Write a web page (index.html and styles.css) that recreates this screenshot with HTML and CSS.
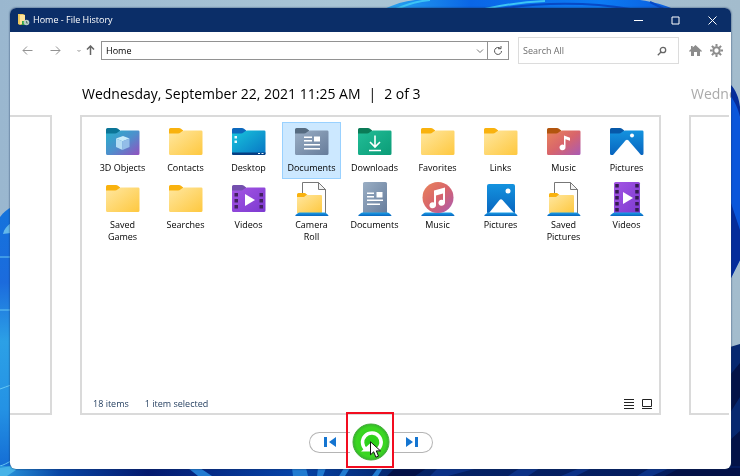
FILE: index.html
```
<!DOCTYPE html>
<html lang="en">
<head>
    <meta charset="UTF-8">
    <meta name="viewport" content="width=device-width, initial-scale=1.0">
    <title>Home - File History</title>
    <link rel="stylesheet" href="styles.css">
</head>
<body>
    <!-- Desktop wallpaper -->
    <svg class="wallpaper" viewBox="0 0 740 476" preserveAspectRatio="none" aria-hidden="true">
        <defs>
            <linearGradient id="sky" x2="1"><stop stop-color="#9ab7cf"/><stop offset=".45" stop-color="#a9c5d6"/><stop offset="1" stop-color="#a3bccd"/></linearGradient>
            <linearGradient id="petal-left" x2="0" y2="1"><stop stop-color="#1473dc"/><stop offset=".28" stop-color="#1b6bdd"/><stop offset=".5" stop-color="#2ca0e6"/><stop offset=".75" stop-color="#2492e4"/><stop offset="1" stop-color="#1267d2"/></linearGradient>
            <linearGradient id="petal-top" x2="1"><stop stop-color="#28a5ef"/><stop offset=".3" stop-color="#0a66e6"/><stop offset=".75" stop-color="#0c7bf3"/><stop offset="1" stop-color="#0a5cdc"/></linearGradient>
            <linearGradient id="petal-bottom" x2="1"><stop stop-color="#2b9be0"/><stop offset=".08" stop-color="#0846a5"/><stop offset=".2" stop-color="#04196e"/><stop offset=".4" stop-color="#0644a8"/><stop offset=".55" stop-color="#042266"/><stop offset="1" stop-color="#041a5c"/></linearGradient>
        </defs>
        <path fill="url(#sky)" d="M0 0h740v476H0z"/>
        <path fill="url(#petal-top)" d="M384 9C395 4 404 1 415 0h225c14 2 25 5 33 9z"/>
        <path fill="none" stroke="#3cc4f5" stroke-width="2" d="M396 9c12-5 22-8 34-9M485 9c18-4 35-7 60-8"/>
        <path fill="none" stroke="#0749c5" stroke-width="2" d="M500 9c40-7 90-7 130 0M650 2l14 7"/>
        <path fill="url(#petal-left)" d="M0 217c4-5 7-8 12-10v269H0z"/>
        <path fill="#63b8ea" d="M3 234c1-5 4-8 8-11v10c-3 0-6 1-8 1z"/>
        <path fill="none" stroke="#67c7f3" stroke-width="1" d="M0 257h11M0 310h11M0 389c4-1 7-3 11-4M0 466c4-1 7-3 11-5"/>
        <path fill="#0a56db" d="M730 84c7 10 10 21 10 34v142l-10 20z"/>
        <path fill="#052d9b" d="M730 84c6 6 9 14 10 23v10c-2-9-5-15-10-22zM730 200l10 30v30l-10 20z"/>
        <path fill="#072870" d="M730 347l10-3v132h-10z"/>
        <path fill="#041348" d="M730 375l10-12v34l-10 16zM730 440l10-9v45h-10z"/>
        <path fill="url(#petal-bottom)" d="M0 466h740v10H0z"/>
        <path fill="#46b3e8" d="M0 476v-8l12-2 4 4-9 6z"/>
        <path fill="#217bd1" d="M188 468h12l12 8h-14zM292 468h14l2 8h-15zM318 468h8l-3 8h-6zM344 468h6l-5 8h-6zM378 468h5l-5 8h-6z"/>
        <path fill="#0b3187" d="M438 468h40l-30 8h-18zM520 468h20l-12 8h-20zM580 468h12l-16 8h-15zM650 468h20l-18 8h-15z"/>
        <path fill="#031047" d="M395 468h32l-12 8h-28zM680 468h60v8h-75z"/>
    </svg>

    <!-- Shared icon artwork -->
    <svg class="sprite" aria-hidden="true">
        <defs>
            <linearGradient id="g-yellow" x2="1" y2="1"><stop stop-color="#ffe7a0"/><stop offset="1" stop-color="#fec83f"/></linearGradient>
            <linearGradient id="g-3d" x2="1" y2="1"><stop stop-color="#26b1cb"/><stop offset=".5" stop-color="#4d90cc"/><stop offset="1" stop-color="#9350bf"/></linearGradient>
            <linearGradient id="g-desktop" x2="1" y2="1"><stop stop-color="#18c5dc"/><stop offset="1" stop-color="#0874c4"/></linearGradient>
            <linearGradient id="g-grey" x2="1" y2="1"><stop stop-color="#9aaec4"/><stop offset="1" stop-color="#667c9b"/></linearGradient>
            <linearGradient id="g-green" x2="1" y2="1"><stop stop-color="#22bd97"/><stop offset="1" stop-color="#0b9c77"/></linearGradient>
            <linearGradient id="g-music" x2="1" y2="1"><stop stop-color="#e9855a"/><stop offset=".5" stop-color="#d8656b"/><stop offset="1" stop-color="#a95ab5"/></linearGradient>
            <linearGradient id="g-blue" x2="0" y2="1"><stop stop-color="#1493df"/><stop offset="1" stop-color="#0864be"/></linearGradient>
            <linearGradient id="g-purple" x2="1" y2="1"><stop stop-color="#a456e4"/><stop offset="1" stop-color="#7c39d0"/></linearGradient>
            <linearGradient id="g-base" x2="0" y2="1"><stop stop-color="#1ca0e8"/><stop offset="1" stop-color="#0866bf"/></linearGradient>
            <radialGradient id="g-restore"><stop stop-color="#27cf16"/><stop offset=".8" stop-color="#3cd722"/><stop offset="1" stop-color="#34b82a"/></radialGradient>
        </defs>
        <symbol id="tab" viewBox="0 0 34 34"><path d="M0 10V4.500Q0 3 1.500 3h8.500q1 0 2 .8l2.200 1.700q-.2 4.500-3.500 4.500z"/></symbol>
        <symbol id="body" viewBox="0 0 34 34"><path d="M0 8.500h9q1.500 0 2.500-.9l1.700-1.400q.9-.7 2-.7h17q1.300 0 1.300 1.300v21.700q0 1.500-1.500 1.500H1.500Q0 30 0 28.500z"/></symbol>
        <symbol id="folder" viewBox="0 0 34 34">
            <use href="#tab" fill="#f9b20e"/><use href="#body" fill="url(#g-yellow)"/>
        </symbol>
        <symbol id="folder-3d" viewBox="0 0 34 34">
            <use href="#tab" fill="#0b7597"/><use href="#body" fill="url(#g-3d)"/>
            <path fill="#c9ecfa" d="M10 13.500l7-2.500 6.500 2.500-7 2.700z"/><path fill="#b4dcf4" d="M10 13.500l6.500 2.700V25L10 22z"/><path fill="#93bde8" d="M23.500 13.500l-7 2.700V25l7-3z"/>
        </symbol>
        <symbol id="folder-desktop" viewBox="0 0 34 34">
            <use href="#tab" fill="#0c68bd"/><use href="#body" fill="url(#g-desktop)"/>
            <path fill="#073e82" d="M0 27.500h33.500v1q0 1.500-1.500 1.500H1.500Q0 30 0 28.500z"/>
            <path fill="#e8fbff" d="M2.500 11h2.500v2.500H2.500zM2.500 15.500h2.500V18H2.500zM26 28h2v1h-2zM29.500 28h2v1h-2z"/>
        </symbol>
        <symbol id="folder-documents" viewBox="0 0 34 34">
            <use href="#tab" fill="#566b80"/><use href="#body" fill="url(#g-grey)"/>
            <path fill="#fff" d="M9 11.500h8V13H9zM9 15h8v1.500H9zM19 11.500h6v5h-6zM9 19h16v1.500H9zM9 23h16v1.500H9z"/>
        </symbol>
        <symbol id="folder-downloads" viewBox="0 0 34 34">
            <use href="#tab" fill="#0b7b57"/><use href="#body" fill="url(#g-green)"/>
            <path fill="none" stroke="#fff" stroke-width="1.600" d="M17 10.500v11M12 17l5 5 5-5M11 25.500h12"/>
        </symbol>
        <symbol id="folder-music" viewBox="0 0 34 34">
            <use href="#tab" fill="#b2550e"/><use href="#body" fill="url(#g-music)"/>
            <path fill="#fff" d="M17 10.500l6 2.200v3l-4.500-1.500v8a3 2.800 0 1 1-1.500-2.200z"/>
        </symbol>
        <symbol id="folder-pictures" viewBox="0 0 34 34">
            <use href="#tab" fill="#0758a8"/><use href="#body" fill="url(#g-blue)"/>
            <path fill="#fff" d="M3 30l12.500-14.500q1.500-1.500 3 0L31 30z"/><circle cx="22" cy="10.500" r="2" fill="#fff"/>
        </symbol>
        <symbol id="folder-videos" viewBox="0 0 34 34">
            <use href="#tab" fill="#7450ae"/><use href="#body" fill="url(#g-purple)"/>
            <path fill="#fff" d="M13 12l10 6-10 6z"/>
            <path fill="#432060" d="M2.500 11h3.500v3.500H2.500zM2.500 17h3.500v3.500H2.500zM2.500 23h3.500v3.500H2.500zM27.500 11H31v3.500h-3.500zM27.500 17H31v3.500h-3.500zM27.500 23H31v3.500h-3.500z"/>
        </symbol>
        <symbol id="base" viewBox="0 0 34 34"><path fill="url(#g-base)" d="M4.500 30.500h25q1 0 1.700.7l2 1.800q.8 1-.5 1H1q-1.200 0-.5-1l2.300-1.800q.7-.7 1.700-.7z"/></symbol>
        <symbol id="library-folder" viewBox="0 0 34 34">
            <path fill="#fff" stroke="#777" d="M7.500 31.500V.5h16l7 7v24z"/><path fill="#f3f3f3" stroke="#777" d="M23.500.5v7h7z"/>
            <path fill="#f9b20e" d="M2 15.500v-3q0-1.500 1.500-1.500h6.500l2.500 2-2 3z"/>
            <path fill="url(#g-yellow)" d="M2 15h7l2.500-2H26q1 0 1 1v17H2z"/>
            <use href="#base"/>
        </symbol>
        <symbol id="library-documents" viewBox="0 0 34 34">
            <rect x="5" width="24" height="32" rx="1.500" fill="url(#g-grey)"/>
            <path fill="#fff" d="M9 10.500h7V12H9zM9 14h7v1.500H9zM18.500 10h6v5.500h-6zM9 17.500h16V19H9zM9 21.500h13V23H9z"/>
            <use href="#base"/>
        </symbol>
        <symbol id="library-music" viewBox="0 0 34 34">
            <use href="#base"/><circle cx="17" cy="15.500" r="15.500" fill="url(#g-music)"/>
            <path fill="#fff" d="M13 8.500l11-3v15.300a3.300 3.100 0 1 1-2-2.900V11.500l-7 2v9.800a3.300 3.100 0 1 1-2-2.900z"/>
        </symbol>
        <symbol id="library-pictures" viewBox="0 0 34 34">
            <rect x="3" y="2" width="28" height="30" rx="2" fill="url(#g-blue)"/>
            <path fill="#fff" d="M5 31l10.500-13q1.500-1.500 3 0L30 31z"/><circle cx="24" cy="9" r="2.500" fill="#fff"/>
            <use href="#base"/>
        </symbol>
        <symbol id="library-videos" viewBox="0 0 34 34">
            <rect x="4" width="26" height="32" rx="1.500" fill="url(#g-purple)"/>
            <path fill="#fff" d="M13 10l10 6-10 6z"/>
            <path fill="none" stroke="#351b51" stroke-width="3.500" stroke-dasharray="3.500 2.500" d="M7 2v28M27 2v28"/>
            <use href="#base"/>
        </symbol>
    </svg>

    <div class="window">
        <header class="titlebar">
            <svg class="app-icon" viewBox="0 0 12 12" aria-hidden="true">
                <path fill="#edc75e" d="M0 0h5l2 1v9l-5 1-2-1z"/><path fill="#ffe49a" d="M2 1h5v9H2z"/>
                <path fill="#35a447" d="M4 7h3v4H4z"/><circle cx="8.500" cy="8.500" r="2.800" fill="#b9cbc5"/><path fill="none" stroke="#59816f" d="M8.500 7v2h1.500"/>
            </svg>
            <h1 class="title">Home - File History</h1>
            <div class="caption-buttons">
                <button type="button" aria-label="Minimize"><svg viewBox="0 0 9 9"><path d="M0 4.500h9"/></svg></button>
                <button type="button" aria-label="Maximize"><svg viewBox="0 0 9 9"><path d="M1 1h7v7H1z"/></svg></button>
                <button type="button" aria-label="Close"><svg viewBox="0 0 9 9"><path d="M.5.5l8 8M8.500.5l-8 8"/></svg></button>
            </div>
        </header>

        <nav class="toolbar">
            <div class="nav-buttons">
                <button type="button" class="back" aria-label="Back"><svg viewBox="0 0 11 11"><path d="M10.500 5.500H1M5 1.500l-4 4 4 4"/></svg></button>
                <button type="button" class="forward" aria-label="Forward"><svg viewBox="0 0 11 11"><path d="M.5 5.500H10M6 1.500l4 4-4 4"/></svg></button>
                <button type="button" class="recent" aria-label="Recent locations"><svg viewBox="0 0 4 4"><path d="M.5 1L2 2.500 3.500 1"/></svg></button>
                <button type="button" class="up" aria-label="Up"><svg viewBox="0 0 9 11"><path d="M4.500 10V1M1 4.500L4.500 1 8 4.500"/></svg></button>
            </div>
            <div class="address">
                <input type="text" value="Home" aria-label="Address">
                <button type="button" class="history" aria-label="Previous locations"><svg viewBox="0 0 8 8"><path d="M1 2.500l3 3 3-3"/></svg></button>
                <button type="button" class="refresh" aria-label="Refresh"><svg viewBox="0 0 10 10"><path d="M7.500 2.500A3.500 3.500 0 1 0 8.500 5M5 2.700h3V0"/></svg></button>
            </div>
            <div class="search">
                <input type="search" placeholder="Search All" aria-label="Search All">
                <button type="button" aria-label="Search"><svg viewBox="0 0 10 10"><circle cx="6" cy="4" r="2.700"/><path d="M4 6L.8 9.200"/></svg></button>
            </div>
            <button type="button" class="tool" aria-label="Home"><svg viewBox="0 0 13 13"><path d="M6.500 1L13 7l-1 1-1-.9V12H8V8H5v4H2V7.100L1 8 0 7l2-1.900V2h1.700v1.500z"/></svg></button>
            <button type="button" class="tool" aria-label="Options"><svg viewBox="0 0 13 13"><circle class="cog" cx="6.500" cy="6.500" r="3.200"/><path class="teeth" d="M6.500 0v2.500M6.500 10.500V13M0 6.500h2.500M10.500 6.500H13M1.900 1.900l1.800 1.800M9.300 9.300l1.800 1.800M1.900 11.100l1.800-1.800M9.300 3.700l1.800-1.800"/></svg></button>
        </nav>

        <main class="versions">
            <section class="version previous" aria-label="Previous version">
                <div class="version-date"></div>
                <div class="panel"></div>
            </section>

            <section class="version current">
                <h2 class="version-date"><span>Wednesday, September 22, 2021 11:25 AM</span><span>|</span><span>2 of 3</span></h2>
                <div class="panel">
                    <div class="files">
                        <button type="button" class="file"><svg><use href="#folder-3d"/></svg><span>3D Objects</span></button>
                        <button type="button" class="file"><svg><use href="#folder"/></svg><span>Contacts</span></button>
                        <button type="button" class="file"><svg><use href="#folder-desktop"/></svg><span>Desktop</span></button>
                        <button type="button" class="file selected" aria-pressed="true"><svg><use href="#folder-documents"/></svg><span>Documents</span></button>
                        <button type="button" class="file"><svg><use href="#folder-downloads"/></svg><span>Downloads</span></button>
                        <button type="button" class="file"><svg><use href="#folder"/></svg><span>Favorites</span></button>
                        <button type="button" class="file"><svg><use href="#folder"/></svg><span>Links</span></button>
                        <button type="button" class="file"><svg><use href="#folder-music"/></svg><span>Music</span></button>
                        <button type="button" class="file"><svg><use href="#folder-pictures"/></svg><span>Pictures</span></button>
                        <button type="button" class="file"><svg><use href="#folder"/></svg><span>Saved<br>Games</span></button>
                        <button type="button" class="file"><svg><use href="#folder"/></svg><span>Searches</span></button>
                        <button type="button" class="file"><svg><use href="#folder-videos"/></svg><span>Videos</span></button>
                        <button type="button" class="file"><svg><use href="#library-folder"/></svg><span>Camera<br>Roll</span></button>
                        <button type="button" class="file"><svg><use href="#library-documents"/></svg><span>Documents</span></button>
                        <button type="button" class="file"><svg><use href="#library-music"/></svg><span>Music</span></button>
                        <button type="button" class="file"><svg><use href="#library-pictures"/></svg><span>Pictures</span></button>
                        <button type="button" class="file"><svg><use href="#library-folder"/></svg><span>Saved<br>Pictures</span></button>
                        <button type="button" class="file"><svg><use href="#library-videos"/></svg><span>Videos</span></button>
                    </div>
                    <div class="statusbar">
                        <span>18 items</span>
                        <span>1 item selected</span>
                        <div class="views">
                            <button type="button" aria-label="Details view"><svg viewBox="0 0 10 10"><path d="M0 .5h10M0 3.500h10M0 6.500h10M0 9.500h10"/></svg></button>
                            <button type="button" aria-label="Large icons view"><svg viewBox="0 0 10 10"><path d="M.5.5h9v7h-9zM0 9.500h10"/></svg></button>
                        </div>
                    </div>
                </div>
            </section>

            <section class="version next" aria-label="Next version">
                <div class="version-date">Wednesday</div>
                <div class="panel"></div>
            </section>
        </main>

        <footer class="controls">
            <button type="button" class="step step-prev" aria-label="Previous version"><svg viewBox="0 0 12 10"><path d="M0 0h3v10H0zM12 0v10L5 5z"/></svg></button>
            <div class="restore-wrap">
                <button type="button" class="restore" aria-label="Restore"><svg viewBox="0 0 38 38">
                    <circle cx="19" cy="19" r="18" fill="url(#g-restore)" stroke="#43ad38"/>
                    <path fill="none" stroke="#fff" stroke-width="3.500" d="M14 26.500a9.300 9.300 0 1 1 11 .5"/>
                    <path fill="#fff" d="M9 28.500h9v-8z"/>
                </svg></button>
                <span class="highlight"></span>
                <svg class="cursor" viewBox="0 0 12 18" aria-hidden="true"><path fill="#fff" stroke="#111" d="M.5.8v13l3.200-3 2.200 5.400 2.600-1.100-2.200-5.200H10.500z"/></svg>
            </div>
            <button type="button" class="step step-next" aria-label="Next version"><svg viewBox="0 0 12 10"><path d="M9 0h3v10H9zM0 0v10l7-5z"/></svg></button>
        </footer>
    </div>
</body>
</html>
```
FILE: styles.css
```
* {
    box-sizing: border-box;
}

body {
    margin: 0;
    padding: 8px 9px 7px 10px;
    height: 100vh;
    font-family: 'Open Sans', 'Noto Sans', sans-serif;
    font-size: 9px;
    line-height: 12px;
    color: #000;
    overflow: hidden;
}

button,
input {
    margin: 0;
    padding: 0;
    border: 0;
    background: none;
    font: inherit;
    color: inherit;
    outline: none;
}

svg {
    display: block;
    flex: none;
}

.wallpaper {
    position: fixed;
    inset: 0;
    width: 100%;
    height: 100%;
    z-index: -1;
}

.sprite {
    position: absolute;
    width: 0;
    height: 0;
}

.window {
    display: flex;
    flex-direction: column;
    height: 100%;
    background: #fff;
    border-radius: 6px;
    overflow: hidden;
    box-shadow: 0 0 2px #17345e;
}

/* Title bar */
.titlebar {
    display: flex;
    align-items: center;
    flex: none;
    height: 24px;
    padding-left: 8px;
    background: #0b2e68;
    color: #fff;
}

.app-icon {
    width: 12px;
    height: 12px;
}

.title {
    flex: 1;
    margin: 0 0 0 3px;
    font-size: 9px;
    font-weight: normal;
}

.caption-buttons {
    display: flex;
}

.caption-buttons button {
    display: grid;
    place-items: center;
    width: 37px;
    height: 24px;
}

.caption-buttons svg {
    width: 9px;
    height: 9px;
    fill: none;
    stroke: #fff;
}

/* Toolbar */
.toolbar {
    display: flex;
    align-items: center;
    flex: none;
    height: 37px;
    padding: 0 8px 0 12px;
}

.nav-buttons {
    display: flex;
    align-items: center;
    width: 79px;
}

.nav-buttons svg {
    width: 11px;
    height: 11px;
    fill: none;
    stroke: #929292;
}

.back {
    margin-right: 17px;
}

.forward {
    margin-right: 16px;
}

.nav-buttons .recent svg {
    width: 4px;
    height: 4px;
}

.nav-buttons .up svg {
    width: 9px;
    margin-left: 5px;
    stroke: #666;
    stroke-width: 1.5px;
}

.address {
    display: flex;
    flex: 1;
    height: 19px;
    border: 1px solid #929292;
}

.address input {
    flex: 1;
    min-width: 0;
    padding-left: 4px;
}

.address button {
    display: grid;
    place-items: center;
    width: 14px;
}

.address .refresh {
    width: 21px;
    border-left: 1px solid #929292;
}

.address svg {
    width: 8px;
    height: 8px;
    fill: none;
    stroke: #777;
}

.address .refresh svg {
    width: 10px;
    height: 10px;
    stroke: #555;
}

.search {
    display: flex;
    align-items: center;
    width: 161px;
    height: 27px;
    margin: 0 10px 0 9px;
    padding: 0 11px 0 4px;
    border: 1px solid #dcdcdc;
}

.search input {
    flex: 1;
    min-width: 0;
}

.search input::placeholder {
    color: #6d6d6d;
    opacity: 1;
}

.search svg {
    width: 10px;
    height: 10px;
    fill: none;
    stroke: #666;
    stroke-width: 1.3px;
}

.tool + .tool {
    margin-left: 8px;
}

.tool svg {
    width: 13px;
    height: 13px;
    fill: #8c8c8c;
}

.tool .cog,
.tool .teeth {
    fill: none;
    stroke: #8c8c8c;
    stroke-width: 2px;
}

/* Backup versions */
.versions {
    display: grid;
    grid-template-columns: 42px minmax(0, 1fr) 42px;
    gap: 28px;
    flex: 1;
    min-height: 0;
    padding-top: 14px;
}

.version {
    display: flex;
    flex-direction: column;
    min-width: 0;
}

.version-date {
    display: flex;
    gap: 8px;
    flex: none;
    height: 22px;
    margin: 0 0 10px;
    padding-left: 2px;
    font-size: 14px;
    font-weight: normal;
    line-height: 22px;
    white-space: nowrap;
}

.next .version-date {
    color: #aaa;
}

.panel {
    display: flex;
    flex-direction: column;
    flex: 1;
    border: 2px solid #dadada;
}

.previous .panel {
    border-left: 0;
}

.next .panel {
    border-right: 0;
    margin-right: 2px;
}

.files {
    display: grid;
    grid-template-columns: repeat(auto-fill, 59px);
    grid-auto-rows: 57px;
    column-gap: 4px;
    flex: 1;
    padding: 5px 0 0 11px;
}

.file {
    display: flex;
    flex-direction: column;
    align-items: center;
    padding-top: 2px;
    border: 1px solid transparent;
    text-align: center;
}

.file svg {
    width: 34px;
    height: 34px;
    margin-bottom: 3px;
}

.selected {
    background: #cce8ff;
    border-color: #99d1ff;
}

.statusbar {
    display: flex;
    align-items: center;
    gap: 16px;
    padding: 0 7px 3px 11px;
    color: #1e395b;
}

.views {
    display: flex;
    gap: 8px;
    margin-left: auto;
}

.views svg {
    width: 10px;
    height: 10px;
    fill: none;
    stroke: #222;
}

/* Playback style controls */
.controls {
    display: flex;
    justify-content: center;
    align-items: center;
    flex: none;
    height: 54px;
}

.step {
    display: grid;
    place-items: center;
    width: 41px;
    height: 21px;
    border: 1px solid #b5b5b5;
}

.step svg {
    width: 12px;
    height: 10px;
    fill: #1475d1;
}

.step-prev {
    border-right: 0;
    border-radius: 11px 0 0 11px;
}

.step-next {
    border-left: 0;
    border-radius: 0 11px 11px 0;
}

.restore-wrap {
    position: relative;
    margin: 0 2px;
}

.restore {
    display: block;
}

.restore svg {
    width: 38px;
    height: 38px;
}

.highlight {
    position: absolute;
    inset: -11px -4px -7px -6px;
    border: 2px solid #f20d20;
}

.cursor {
    position: absolute;
    top: 18px;
    left: 18px;
    width: 12px;
    height: 18px;
}
```
